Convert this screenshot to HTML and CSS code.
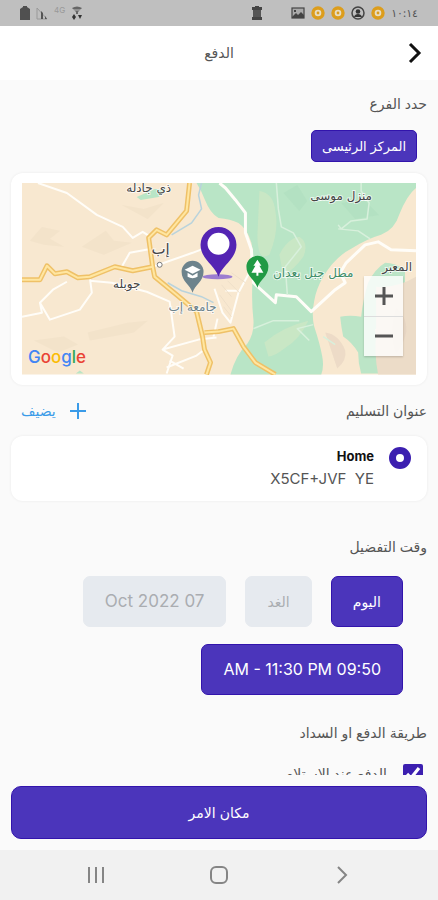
FILE: index.html
```html
<!DOCTYPE html>
<html lang="ar" dir="rtl">

<head>
  <meta charset="UTF-8">
  <meta name="viewport" content="width=device-width, initial-scale=1">
  <title>الدفع</title>
  <link rel="stylesheet" href="styles.css">
</head>

<body>
  <div class="status-bar">
    <div class="status-group">
      <span class="clock">١٠:١٤</span>
      <svg width="14" height="14" viewBox="0 0 14 14"><circle cx="7" cy="7" r="5" fill="#e8dcc0" stroke="#dc9d1c" stroke-width="3.4"/><circle cx="7" cy="7" r="1.4" fill="#dc9d1c"/></svg>
      <svg width="14" height="14" viewBox="0 0 14 14"><circle cx="7" cy="7" r="6" fill="none" stroke="#444" stroke-width="1.5"/><circle cx="7" cy="5.5" r="2.3" fill="#333"/><path d="M3 11c1-4 7-4 8 0z" fill="#333"/></svg>
      <svg width="14" height="14" viewBox="0 0 14 14"><circle cx="7" cy="7" r="5" fill="#e8dcc0" stroke="#dc9d1c" stroke-width="3.4"/><circle cx="7" cy="7" r="1.4" fill="#dc9d1c"/></svg>
      <svg width="14" height="14" viewBox="0 0 14 14"><circle cx="7" cy="7" r="5" fill="#e8dcc0" stroke="#dc9d1c" stroke-width="3.4"/><circle cx="7" cy="7" r="1.4" fill="#dc9d1c"/></svg>
      <svg width="14" height="14" viewBox="0 0 14 14"><rect x="1" y="2" width="12" height="10" fill="#aaa" stroke="#444" stroke-width="1.2"/><path d="M1 11l4-4 2 2 3-3 3 3v3H1z" fill="#444"/><path d="M3 4h2v2H3z" fill="#444"/></svg>
      <svg class="battery-small" width="10" height="14" viewBox="0 0 10 14"><path d="M3 0h4v1h3v3H0V1h3z" fill="#444"/><path d="M1 4h8v7H1z" fill="#555"/><path d="M0 11h10v3H0z" fill="#444"/></svg>
    </div>
    <div class="status-group signals">
      <svg width="12" height="14" viewBox="0 0 12 14"><path d="M1 2q5-3 10 0L7 6v2H5V6z" fill="#666"/><path d="M2 4h8" stroke="#bbb"/><path d="M1 11l2-3 2 3-2 3zM7 9h4l-2 4z" fill="#333"/></svg>
      <span class="network">4G</span>
      <svg width="12" height="14" viewBox="0 0 12 14"><path d="M1 13V2l10 11z" fill="none" stroke="#999"/><path d="M5 13V5l2 2v6zM9 13v-3l2 3z" fill="#555"/></svg>
      <svg width="10" height="14" viewBox="0 0 10 14"><path d="M3 0h4v1l3 2v11H0V3l3-2z" fill="#505050"/></svg>
    </div>
  </div>

  <header class="header">
    <button class="back" aria-label="رجوع">
      <svg width="14" height="22" viewBox="0 0 14 22"><path d="M2 2l9 9-9 9" fill="none" stroke="#111" stroke-width="3"/></svg>
    </button>
    <h1>الدفع</h1>
  </header>

  <main class="content">
    <section class="branch">
      <h2>حدد الفرع</h2>
      <button class="chip branch-chip">المركز الرئيسى</button>
      <div class="card map-card">
        <div class="map">
          <svg class="map-drawing" viewBox="0 0 395 192" preserveAspectRatio="xMidYMid slice">
            <rect width="395" height="192" fill="#f8e8d0"/>
            <!-- relief -->
            <g fill="#efdfc6" opacity=".5">
              <path d="M8 58l12-14 18 4-10 8 14 8-20-2z"/>
              <path d="M60 64l24-16 8 10 18 2-28 12z"/>
              <path d="M66 150l40-10 20-2-14 12-44 8z"/>
              <path d="M12 158l30-4 14 8-20 8z"/>
              <path d="M100 22l22 4 20-6-16 16z"/>
            </g>
            <!-- forest -->
            <path d="M175 0q5 8 8 16 6 15 14 19 12 1 20 5 9 6 13 20 4 20 1 40-1 20 1 37 1 14-6 24-12 12-17 31h91q3-8 1-18-2-12-8-30-3-12 0-26 2-12 9-24 12-20 28-28 16-10 30-14 14-6 18-20 8-20 17-27V0z" fill="#b9e5c6"/>
            <path d="M319 134q10-2 21 0 2-18 7-34 7-14 17-20 10 0 20 7v40l-30 20 6 44h-20q-3-10-3-21-6-10-15-16-2-10-3-20z" fill="#bce5c7"/>
            <path d="M115 14l18-8 12 0-8 8-18 3zM54 191l4-3 4 3z" fill="#b9e5c6"/>
            <path d="M238 8q14 2 16 20 4 20-6 44-12 8-12-20zM258 72q8-16 20-18 10 6 4 20-10 14-20 18zM243 160q18-16 44-22-8 18-24 28-10 8-16 8z" fill="#d3e8c4" opacity=".6"/>
            <path d="M262 10l14-8 10 16-8 10zM320 20l22-4 16 16-24 4z" fill="#a9d9bb" opacity=".35"/>
            <path d="M355 104q20 2 40-10v98h-38q-4-20-2-40z" fill="#ecdcc8"/>
            <path d="M304 150q14 2 20 18 2 10-8 18zM375 125q12 10 10 26-4 14-10 20-8-20 0-46z" fill="#dfcdbc" opacity=".45"/>
            <!-- stream -->
            <path d="M180 0l-3 12 3 14-10 14-20 12M146 100l14 8 20 6 12 6" fill="none" stroke="#b9d3dc" stroke-width="1.5"/>
            <!-- side roads -->
            <g fill="none" stroke="#fffdf8" stroke-linejoin="round">
              <path stroke-width="2" d="M16 0l29 10 30 22 26 12 10 11 10-6 8 5M0 134l20-4-2-10 13-13 14-8M18 120l10 17 30-10 12-17-2-15M68 98l22 2 35 9 23 10 5 35-12 13 10 6-6 18M141 167l36-10 18-2"/>
              <path stroke-width="2" d="M100 84l8-14 22-4M131 84l40-14 26-10M145 185l30-12 8-6M148 178l14 8"/>
              <path stroke-width="3" d="M198 0l6 5 10 12 10 13v20l6 17 2 33 22 20 1-8 20 2 15 15 24-22 10-7-5-10 6-10 19-18 13-3 13 8 25 1"/>
              <path stroke-width="2" d="M230 86l-13 24-8 30-8-10-8-24M192 154l4-18M204 108l12 0"/>
              <path stroke="#d8f0dc" stroke-width="1.5" d="M255 0l2 26 3 18 12 6 8 14-16 20 2 28M340 0v8l8 12-2 16-16 2-10 8-3-4M317 46l20 2 12 8M292 142l-16 4 12 12M232 146l20-8 26 0M302 154l12 8"/>
            </g>
            <g fill="none" stroke="#eedfc9">
              <path d="M200 102l10 12M198 112l12 16M202 124l8 10M210 90l14 10M206 98l12 12"/>
            </g>
            <!-- main roads -->
            <g fill="none" stroke="#efc167" stroke-width="5" stroke-linejoin="round">
              <path d="M0 97h18l7-14 8 8 12-2 11 6 12-1 25-10 18 4 20-4"/>
              <path d="M168 0l-3 28-20 24-10-5-8 8 4 29 2 10 22 18 20 17 6 25 2 13 6 13-4 12M183 150l14-1 15-3 10 18 12 16 20 12"/>
            </g>
            <g fill="none" stroke="#ffe6a1" stroke-width="2" stroke-linejoin="round">
              <path d="M0 97h18l7-14 8 8 12-2 11 6 12-1 25-10 18 4 20-4"/>
              <path d="M168 0l-3 28-20 24-10-5-8 8 4 29 2 10 22 18 20 17 6 25 2 13 6 13-4 12M183 150l14-1 15-3 10 18 12 16 20 12"/>
            </g>
            <circle cx="138" cy="82" r="2.5" fill="#fff" stroke="#777"/>
            <!-- places -->
            <g class="places">
              <text x="127" y="9">ذي جادله</text>
              <text x="139" y="71" class="city">إب</text>
              <text x="105" y="105">جوبله</text>
              <text x="320" y="17">منزل موسى</text>
              <text x="376" y="88">المعبر</text>
              <text x="171" y="128" class="campus">جامعة إب</text>
              <text x="292" y="94" class="park">مطل جبل بعدان</text>
            </g>
            <!-- markers -->
            <ellipse cx="196" cy="94" rx="15" ry="2.5" fill="#9c7dd0"/>
            <path d="M171 110c-2-8-11-11-11-21a11 11 0 0 1 22 0c0 10-9 13-11 21z" fill="#6d838c"/>
            <path d="M163 87l8-4 8 4-8 4zM166 90l5 3 5-3v4q-5 3-10 0z" fill="#fff"/>
            <path d="M236 105c-2-8-11-11-11-21a11 11 0 0 1 22 0c0 10-9 13-11 21z" fill="#219a45"/>
            <path d="M236 77l4 6h-2l4 7h-5v3h-2v-3h-5l4-7h-2z" fill="#fff"/>
            <path d="M197 94c-4-12-18-18-18-32a18 18 0 0 1 36 0c0 14-14 20-18 32z" fill="#5424b3"/>
            <circle cx="197" cy="61" r="11" fill="#fff"/>
            <text x="6" y="180" class="google"><tspan fill="#4285f4">G</tspan><tspan fill="#ea4335">o</tspan><tspan fill="#fbbc05">o</tspan><tspan fill="#4285f4">g</tspan><tspan fill="#34a853">l</tspan><tspan fill="#ea4335">e</tspan></text>
          </svg>
          <div class="zoom">
            <button aria-label="تكبير"><svg width="18" height="18" viewBox="0 0 18 18"><path d="M9 0v18M0 9h18" stroke="#555" stroke-width="3"/></svg></button>
            <button aria-label="تصغير"><svg width="18" height="18" viewBox="0 0 18 18"><path d="M0 9h18" stroke="#555" stroke-width="3"/></svg></button>
          </div>
        </div>
      </div>
    </section>

    <section class="address">
      <div class="section-head">
        <h2>عنوان التسليم</h2>
        <a class="add" href="#">
          <svg width="16" height="16" viewBox="0 0 16 16"><path d="M8 0v16M0 8h16" stroke="#3a9be8" stroke-width="2"/></svg>
          يضيف
        </a>
      </div>
      <label class="card address-card">
        <input type="radio" name="address" checked>
        <span class="address-text">
          <strong>Home</strong>
          <span>X5CF+JVF&nbsp; YE</span>
        </span>
      </label>
    </section>

    <section class="time">
      <h2>وقت التفضيل</h2>
      <div class="slots">
        <button class="slot active">اليوم</button>
        <button class="slot">الغد</button>
        <button class="slot date">Oct 2022 07</button>
      </div>
      <div class="slots">
        <button class="slot hours active">AM - 11:30 PM 09:50</button>
      </div>
    </section>

    <section class="payment">
      <h2>طريقة الدفع او السداد</h2>
      <label class="method">
        <input type="checkbox" checked>
        <span>الدفع عند الاستلام</span>
      </label>
    </section>
  </main>

  <footer class="order">
    <button class="order-button">مكان الامر</button>
  </footer>

  <nav class="system-nav">
    <button aria-label="رجوع"><svg width="20" height="20" viewBox="0 0 20 20"><path d="M6 2l8 8-8 8" fill="none" stroke="#858585" stroke-width="2"/></svg></button>
    <button aria-label="الرئيسية"><svg width="20" height="20" viewBox="0 0 20 20"><rect x="2" y="2" width="16" height="16" rx="5" fill="none" stroke="#858585" stroke-width="2"/></svg></button>
    <button aria-label="التطبيقات"><svg width="20" height="20" viewBox="0 0 20 20"><path d="M3 2v16M10 2v16M17 2v16" stroke="#858585" stroke-width="2"/></svg></button>
  </nav>
</body>

</html>
```

FILE: styles.css
```css
* {
  box-sizing: border-box;
}

body {
  margin: 0;
  height: 100vh;
  display: flex;
  flex-direction: column;
  font-family: Inter, "DejaVu Sans", sans-serif;
  font-size: 14px;
  color: #555;
  background-color: #fafafa;
}

button {
  font-family: inherit;
  font-size: inherit;
  border: none;
  padding: 0;
  background: none;
  cursor: pointer;
}

svg {
  display: block;
}

h1, h2 {
  margin: 0;
  font-size: 14px;
  font-weight: 400;
  line-height: 24px;
}

/* status bar */
.status-bar {
  flex: none;
  height: 26px;
  padding: 0 20px;
  display: flex;
  justify-content: space-between;
  align-items: center;
  background-color: #bfbfbf;
}

.status-group {
  display: flex;
  align-items: center;
  gap: 6px;
}

.clock {
  font-size: 11px;
}

.network {
  font-size: 8px;
  color: #999;
  padding-bottom: 6px;
}

.battery-small {
  margin-right: 23px;
}

/* header */
.header {
  flex: none;
  height: 54px;
  padding: 0 16px;
  display: grid;
  grid-template-columns: 14px 1fr 14px;
  align-items: center;
  background-color: #fff;
}

.header h1 {
  text-align: center;
}

/* content */
.content {
  flex: 1;
  min-height: 0;
  padding: 12px 11px 0;
  overflow-y: auto;
  scrollbar-width: none;
}

.card {
  background-color: #fff;
  border-radius: 12px;
  box-shadow: 0 0 3px rgba(0, 0, 0, 0.07);
}

.chip {
  display: block;
  height: 32px;
  margin: 14px 10px 11px;
  padding: 0 10px;
  font-size: 13px;
  color: #fff;
  background-color: #4b35bb;
  border: 1px solid #3214ac;
  border-radius: 5px;
}

.map-card {
  padding: 10px 11px;
}

.map {
  position: relative;
}

.map-drawing {
  width: 100%;
}

.places text {
  font-family: "DejaVu Sans", sans-serif;
  font-size: 12px;
  text-anchor: middle;
  fill: #444;
  stroke: #fff;
  stroke-width: 2px;
  stroke-opacity: 0.7;
  paint-order: stroke;
}

.places .city {
  font-size: 15px;
}

.places .campus {
  fill: #6d838c;
}

.places .park {
  fill: #3f8d68;
}

.google {
  font-family: Inter, sans-serif;
  font-size: 17px;
  font-weight: 500;
  direction: ltr;
}

.zoom {
  position: absolute;
  right: 13px;
  bottom: 19px;
  width: 39px;
  background-color: rgba(255, 255, 255, 0.8);
  box-shadow: 0 1px 2px rgba(0, 0, 0, 0.2);
}

.zoom button {
  width: 100%;
  height: 40px;
  display: flex;
  justify-content: center;
  align-items: center;
}

.zoom button + button {
  border-top: 1px solid #ddd;
}

.section-head {
  display: flex;
  justify-content: space-between;
  align-items: center;
  margin: 14px 0 13px;
}

.add {
  display: flex;
  align-items: center;
  gap: 14px;
  padding-left: 10px;
  line-height: 24px;
  color: #3a9be8;
  text-decoration: none;
}

.address-card {
  display: flex;
  align-items: flex-start;
  gap: 15px;
  padding: 10px 16px;
}

.address-card input {
  appearance: none;
  width: 22px;
  height: 22px;
  margin: 1px 0;
  border: 7px solid #3c1fb0;
  border-radius: 50%;
  background-color: #fff;
}

.address-text {
  display: flex;
  flex-direction: column;
  font-size: 15px;
  line-height: 24px;
}

.address-text strong {
  font-size: 13px;
  line-height: 21px;
  color: #111;
}

.time {
  margin-top: 34px;
}

.slots {
  display: flex;
  gap: 19px;
  margin: 17px 24px 0;
}

.slot {
  height: 51px;
  padding: 0 21px;
  color: #aaadb1;
  background-color: #e6eaef;
  border: 1px solid #e6eaef;
  border-radius: 7px;
}

.slot.active {
  color: #fff;
  background-color: #4b35bb;
  border-color: #3214ac;
}

.slot.hours {
  font-size: 16px;
}

.slot.date {
  font-size: 17px;
}

.payment {
  margin-top: 26px;
}

.method {
  display: flex;
  align-items: center;
  gap: 16px;
  margin: 19px 4px;
}

.method input {
  width: 20px;
  height: 20px;
  margin: 0;
  accent-color: #3c1fb0;
}

/* order button */
.order {
  flex: none;
  padding: 11px;
}

.order-button {
  width: 100%;
  height: 53px;
  color: #fff;
  background-color: #4b35bb;
  border: 1px solid #3214ac;
  border-radius: 10px;
}

.system-nav {
  flex: none;
  height: 50px;
  padding: 0 86px;
  display: flex;
  justify-content: space-between;
  align-items: center;
  background-color: #f1f1f1;
}
```
